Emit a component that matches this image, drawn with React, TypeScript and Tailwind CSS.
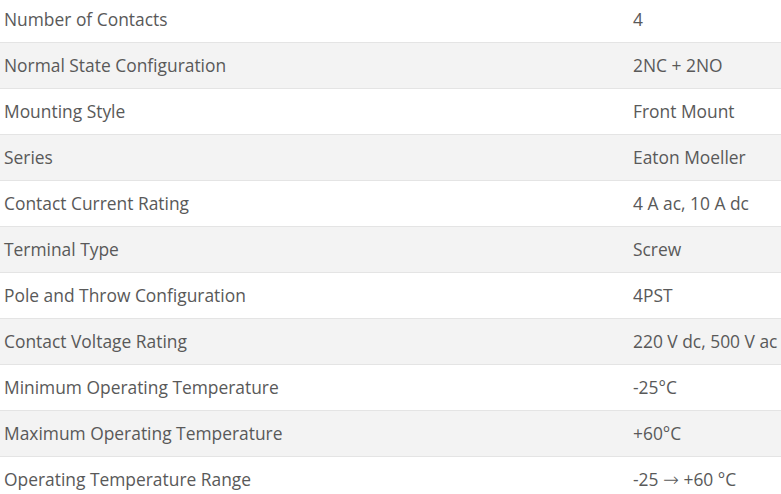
const specs: [string, React.ReactNode][] = [
  ['Number of Contacts', '4'],
  ['Normal State Configuration', '2NC + 2NO'],
  ['Mounting Style', 'Front Mount'],
  ['Series', 'Eaton Moeller'],
  ['Contact Current Rating', '4 A ac, 10 A dc'],
  ['Terminal Type', 'Screw'],
  ['Pole and Throw Configuration', '4PST'],
  ['Contact Voltage Rating', '220 V dc, 500 V ac'],
  ['Minimum Operating Temperature', '-25°C'],
  ['Maximum Operating Temperature', '+60°C'],
  [
    'Operating Temperature Range',
    <>
      -25 <span className="font-['DejaVu_Sans',sans-serif] font-extralight text-[19px] leading-none">→</span> +60 °C
    </>,
  ],
];

export default function App() {
  return (
    <div className="w-[781px] h-[494px] overflow-hidden bg-white font-['Open_Sans',sans-serif] text-[17.4px] text-[#595959]">
      <table className="w-[781px] table-fixed border-collapse -mt-[4px]">
        <tbody>
          {specs.map(([label, value], i) => (
            <tr key={label} className={i % 2 === 1 ? 'bg-[#f3f3f3]' : 'bg-white'}>
              <td className="w-[633px] h-[46px] pl-[4px] border-b border-[#e4e4e4] align-middle leading-[24px]">{label}</td>
              <td className="h-[46px] p-0 border-b border-[#e4e4e4] align-middle leading-[24px] whitespace-nowrap">
                {value}
              </td>
            </tr>
          ))}
        </tbody>
      </table>
    </div>
  );
}
